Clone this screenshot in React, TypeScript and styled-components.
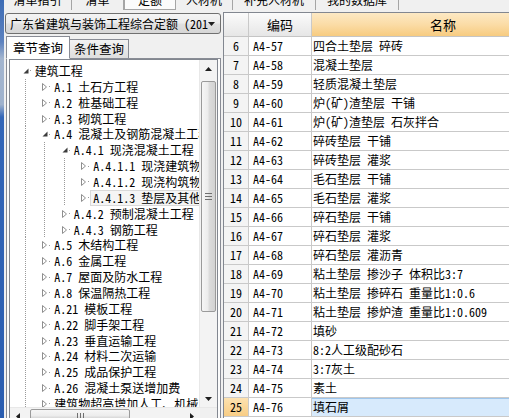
import React from 'react'
import styled, { createGlobalStyle } from 'styled-components'

const GlobalStyle = createGlobalStyle`
  html, body { margin: 0; padding: 0; background: #f0f0f0; }
  body {
    font-family: "Noto Sans Mono CJK SC", "Noto Sans CJK SC", "Liberation Sans", sans-serif;
    font-size: 12px;
    color: #000;
  }
`

const Screen = styled.div`
  width: 509px;
  height: 418px;
  overflow: hidden;
  display: flex;
  background: #f0f0f0;
`
const SideStrip = styled.div`
  width: 4px;
  flex: none;
  background: linear-gradient(to bottom, #3d6cb5 0%, #5d82bf 10%, #a3b5cf 14%, #9fb2cd 25%, #3366b8 28%, #2a5db0 100%);
`
const Main = styled.div`
  flex: 1;
  display: flex;
  flex-direction: column;
  min-width: 0;
`
const TopTabs = styled.div`
  height: 10px;
  flex: none;
  overflow: hidden;
  display: flex;
  align-items: flex-end;
`
const TopTab = styled.div<{ $w: number; $active?: boolean }>`
  width: ${p => p.$w}px;
  height: 20px;
  flex: none;
  box-sizing: border-box;
  padding-top: 3px;
  line-height: 14px;
  text-align: center;
  white-space: nowrap;
  border-right: 1px solid #a5a5a5;
  border-left: ${p => (p.$active ? '1px solid #a5a5a5' : 'none')};
  border-bottom: ${p => (p.$active ? '1px solid #a5a5a5' : 'none')};
  background: ${p => (p.$active ? '#fbfbfb' : 'transparent')};
`
const Body = styled.div`
  flex: 1;
  display: flex;
  min-height: 0;
`
const LeftPanel = styled.div`
  width: 216px;
  margin-left: 1px;
  flex: none;
  display: flex;
  flex-direction: column;
  padding-top: 3px;
`
const Dropdown = styled.div`
  height: 21px;
  box-sizing: border-box;
  border: 1px solid #707070;
  border-radius: 3px;
  background: linear-gradient(to bottom, #f4f4f4 0%, #ececec 48%, #e0e0e0 52%, #d6d6d6 100%);
  display: flex;
  align-items: center;
  padding: 0 5px 0 4px;
`
const DropText = styled.span`
  flex: 1;
  overflow: hidden;
  white-space: nowrap;
  line-height: 18px;
`
const TabRow = styled.div`
  height: 23px;
  margin-top: 1px;
  padding-left: 1px;
  display: flex;
  align-items: flex-end;
  position: relative;
  z-index: 1;
`
const PanelTab = styled.div<{ $active?: boolean }>`
  box-sizing: border-box;
  height: ${p => (p.$active ? 23 : 20)}px;
  padding: 0 ${p => (p.$active ? 6 : 4)}px;
  border: 1px solid #898c95;
  border-left: ${p => (p.$active ? '1px solid #898c95' : 'none')};
  border-bottom: ${p => (p.$active ? '1px solid #fff' : '1px solid #898c95')};
  margin-bottom: -1px;
  background: ${p => (p.$active ? '#fff' : 'linear-gradient(to bottom, #f2f2f2, #dedede)')};
  font-size: 12.5px;
  line-height: ${p => (p.$active ? 21 : 18)}px;
  white-space: nowrap;
`
const TabPage = styled.div`
  flex: 1;
  margin-left: 1px;
  border: 1px solid #898c95;
  border-bottom: none;
  background: #fcfcfc;
  padding: 0 2px;
  display: flex;
  flex-direction: column;
  min-height: 0;
`
const Tree = styled.div`
  border: 1px solid #828790;
  background: #fff;
  display: flex;
  flex-direction: column;
  flex: none;
  height: 370px;
`
const TreeMain = styled.div`
  height: 347px;
  flex: none;
  display: flex;
`
const Viewport = styled.div`
  flex: 1;
  overflow: hidden;
  padding-top: 3px;
  min-width: 0;
`
const TreeRow = styled.div`
  height: 15.86px;
  display: flex;
  align-items: center;
  padding-left: 12.7px;
  white-space: nowrap;
`
const Guide = styled.span`
  width: 19.5px;
  flex: none;
  align-self: stretch;
  background-image: linear-gradient(to bottom, #9a9a9a 50%, transparent 50%);
  background-size: 1px 2px;
  background-repeat: repeat-y;
  background-position: 2px 0;
`
const Expander = styled.span`
  width: 6px;
  height: 8px;
  flex: none;
  display: flex;
  align-items: center;
`
const Connector = styled.span`
  width: 3px;
  height: 1px;
  flex: none;
  background-image: linear-gradient(to right, transparent 1px, #9a9a9a 1px, #9a9a9a 2px, transparent 2px);
`
const Label = styled.span<{ $selected?: boolean }>`
  border: 1px solid ${p => (p.$selected ? '#d9d9d9' : 'transparent')};
  background: ${p => (p.$selected ? '#f5f5f5' : 'transparent')};
  padding: 0 2px;
  line-height: 14px;
`
const VScroll = styled.div`
  width: 17px;
  flex: none;
  display: flex;
  flex-direction: column;
  background: #f3f3f3;
  border-left: 1px solid #e8e8e8;
`
const ScrollBtn = styled.div<{ $size?: number }>`
  height: 17px;
  width: ${p => (p.$size ? `${p.$size}px` : 'auto')};
  flex: none;
  display: flex;
  align-items: center;
  justify-content: center;
`
const VTrack = styled.div`
  flex: 1;
  padding: 4px 1px 0;
`
const VThumb = styled.div`
  height: 231px;
  box-sizing: border-box;
  border: 1px solid #9a9a9a;
  border-radius: 2px;
  background: linear-gradient(to right, #f6f6f6 0%, #ececec 45%, #dcdcdc 55%, #d2d2d2 100%);
  display: flex;
  align-items: center;
  justify-content: center;
`
const HScroll = styled.div`
  height: 17px;
  flex: none;
  display: flex;
  background: #f3f3f3;
  border-top: 1px solid #e8e8e8;
`
const HTrack = styled.div`
  flex: 1;
  padding: 1px 0 1px 4px;
`
const HThumb = styled.div`
  width: 100px;
  height: 100%;
  box-sizing: border-box;
  border: 1px solid #9a9a9a;
  border-radius: 2px;
  background: linear-gradient(to bottom, #f6f6f6 0%, #ececec 45%, #dcdcdc 55%, #d2d2d2 100%);
  display: flex;
  align-items: center;
  justify-content: center;
`
const Corner = styled.div`
  width: 17px;
  flex: none;
  background: #f0f0f0;
`
const Grid = styled.div`
  flex: 1;
  margin: 2px 0 0 2px;
  border-left: 1px solid #828790;
  border-top: 1px solid #828790;
  background: #fff;
  overflow: hidden;
  min-width: 0;
`
const GridRow = styled.div<{ $head?: boolean }>`
  display: flex;
  height: ${p => (p.$head ? 24 : 19)}px;
  box-sizing: border-box;
  border-bottom: 1px solid ${p => (p.$head ? '#c5c5c5' : '#c9c9c9')};
`
const NumCell = styled.div<{ $head?: boolean; $active?: boolean }>`
  width: 25px;
  flex: none;
  box-sizing: border-box;
  border-right: 1px solid #c9c9c9;
  text-align: center;
  line-height: 18px;
  background: ${p =>
    p.$head
      ? 'linear-gradient(to bottom, #fbfbfb, #e6e6e6)'
      : p.$active
      ? 'linear-gradient(to bottom, #fde2b0, #f8cd85)'
      : '#f4f4f4'};
`
const CodeCell = styled.div<{ $head?: boolean }>`
  width: 63px;
  flex: none;
  box-sizing: border-box;
  border-right: 1px solid #c9c9c9;
  padding-left: ${p => (p.$head ? 0 : 4)}px;
  text-align: ${p => (p.$head ? 'center' : 'left')};
  line-height: ${p => (p.$head ? 23 : 18)}px;
  font-size: ${p => (p.$head ? 13 : 12)}px;
  background: ${p => (p.$head ? 'linear-gradient(to bottom, #fbfbfb, #e6e6e6)' : '#fff')};
`
const NameCell = styled.div<{ $head?: boolean; $active?: boolean }>`
  width: 262px;
  flex: none;
  box-sizing: border-box;
  padding-left: ${p => (p.$head ? 0 : 1)}px;
  text-align: ${p => (p.$head ? 'center' : 'left')};
  line-height: ${p => (p.$head ? 23 : 18)}px;
  font-size: ${p => (p.$head ? 13 : 12)}px;
  white-space: nowrap;
  overflow: hidden;
  background: ${p =>
    p.$head
      ? 'linear-gradient(to bottom, #fde9c4 0%, #fbdca6 50%, #f7cb80 100%)'
      : p.$active
      ? '#d7eafc'
      : '#fff'};
  box-shadow: ${p => (p.$active ? 'inset 0 1px 0 #9fc6ec' : 'none')};
`

type Node = { level: number; text: string; state?: 'open' | 'closed'; selected?: boolean }

const treeNodes: Node[] = [
  { level: 0, text: '建筑工程', state: 'open' },
  { level: 1, text: 'A.1 土石方工程', state: 'closed' },
  { level: 1, text: 'A.2 桩基础工程', state: 'closed' },
  { level: 1, text: 'A.3 砌筑工程', state: 'closed' },
  { level: 1, text: 'A.4 混凝土及钢筋混凝土工程', state: 'open' },
  { level: 2, text: 'A.4.1 现浇混凝土工程', state: 'open' },
  { level: 3, text: 'A.4.1.1 现浇建筑物混凝土', state: 'closed' },
  { level: 3, text: 'A.4.1.2 现浇构筑物混凝土', state: 'closed' },
  { level: 3, text: 'A.4.1.3 垫层及其他', state: 'closed', selected: true },
  { level: 2, text: 'A.4.2 预制混凝土工程', state: 'closed' },
  { level: 2, text: 'A.4.3 钢筋工程', state: 'closed' },
  { level: 1, text: 'A.5 木结构工程', state: 'closed' },
  { level: 1, text: 'A.6 金属工程', state: 'closed' },
  { level: 1, text: 'A.7 屋面及防水工程', state: 'closed' },
  { level: 1, text: 'A.8 保温隔热工程', state: 'closed' },
  { level: 1, text: 'A.21 模板工程', state: 'closed' },
  { level: 1, text: 'A.22 脚手架工程', state: 'closed' },
  { level: 1, text: 'A.23 垂直运输工程', state: 'closed' },
  { level: 1, text: 'A.24 材料二次运输', state: 'closed' },
  { level: 1, text: 'A.25 成品保护工程', state: 'closed' },
  { level: 1, text: 'A.26 混凝土泵送增加费', state: 'closed' },
  { level: 1, text: '建筑物超高增加人工、机械', state: 'closed' },
]

const rows: [number, string, string][] = [
  [6, 'A4-57', '四合土垫层 碎砖'],
  [7, 'A4-58', '混凝土垫层'],
  [8, 'A4-59', '轻质混凝土垫层'],
  [9, 'A4-60', '炉(矿)渣垫层 干铺'],
  [10, 'A4-61', '炉(矿)渣垫层 石灰拌合'],
  [11, 'A4-62', '碎砖垫层 干铺'],
  [12, 'A4-63', '碎砖垫层 灌浆'],
  [13, 'A4-64', '毛石垫层 干铺'],
  [14, 'A4-65', '毛石垫层 灌浆'],
  [15, 'A4-66', '碎石垫层 干铺'],
  [16, 'A4-67', '碎石垫层 灌浆'],
  [17, 'A4-68', '碎石垫层 灌沥青'],
  [18, 'A4-69', '粘土垫层 掺沙子 体积比3:7'],
  [19, 'A4-70', '粘土垫层 掺碎石 重量比1:0.6'],
  [20, 'A4-71', '粘土垫层 掺炉渣 重量比1:0.609'],
  [21, 'A4-72', '填砂'],
  [22, 'A4-73', '8:2人工级配砂石'],
  [23, 'A4-74', '3:7灰土'],
  [24, 'A4-75', '素土'],
  [25, 'A4-76', '填石屑'],
]

const topTabs: [string, number][] = [
  ['清单指引', 68],
  ['清单', 52],
  ['定额', 52],
  ['人材机', 57],
  ['补充人材机', 83],
  ['我的数据库', 83],
]

function Toggle({ state }: { state?: 'open' | 'closed' }) {
  if (state === 'open') {
    return (
      <svg width="6" height="8" viewBox="0 0 6 8">
        <polygon points="5.5,1.5 5.5,6.5 0.5,6.5" fill="#3c3c3c" />
      </svg>
    )
  }
  return (
    <svg width="6" height="8" viewBox="0 0 6 8">
      <polygon points="0.5,0.5 4.5,4 0.5,7.5" fill="none" stroke="#8e8e8e" strokeWidth="1" />
    </svg>
  )
}

function Arrow({ dir }: { dir: 'up' | 'down' | 'left' | 'right' }) {
  const pts = {
    up: '0,4 3.5,0 7,4',
    down: '0,0 3.5,4 7,0',
    left: '4,0 0,3.5 4,7',
    right: '0,0 4,3.5 0,7',
  }[dir]
  const vertical = dir === 'up' || dir === 'down'
  return (
    <svg width={vertical ? 7 : 4} height={vertical ? 4 : 7} viewBox={vertical ? '0 0 7 4' : '0 0 4 7'}>
      <polygon points={pts} fill="#1e1e1e" />
    </svg>
  )
}

function Grip({ horizontal }: { horizontal?: boolean }) {
  return horizontal ? (
    <svg width="7" height="7" viewBox="0 0 7 7">
      <path d="M0.5 0v7M3.5 0v7M6.5 0v7" stroke="#6f6f6f" strokeWidth="1" />
    </svg>
  ) : (
    <svg width="7" height="7" viewBox="0 0 7 7">
      <path d="M0 0.5h7M0 3.5h7M0 6.5h7" stroke="#6f6f6f" strokeWidth="1" />
    </svg>
  )
}

export default function App() {
  return (
    <>
      <GlobalStyle />
      <Screen>
        <SideStrip />
        <Main>
          <TopTabs>
            {topTabs.map(([t, w]) => (
              <TopTab key={t} $w={w} $active={t === '定额'}>
                {t}
              </TopTab>
            ))}
          </TopTabs>
          <Body>
            <LeftPanel>
              <Dropdown>
                <DropText>广东省建筑与装饰工程综合定额 (2010)</DropText>
                <Arrow dir="down" />
              </Dropdown>
              <TabRow>
                <PanelTab $active>章节查询</PanelTab>
                <PanelTab>条件查询</PanelTab>
              </TabRow>
              <TabPage>
                <Tree>
                  <TreeMain>
                    <Viewport>
                      {treeNodes.map((n, i) => (
                        <TreeRow key={i}>
                          {Array.from({ length: n.level }).map((_, g) => (
                            <Guide key={g} />
                          ))}
                          <Expander>
                            <Toggle state={n.state} />
                          </Expander>
                          <Connector />
                          <Label $selected={n.selected}>{n.text}</Label>
                        </TreeRow>
                      ))}
                    </Viewport>
                    <VScroll>
                      <ScrollBtn>
                        <Arrow dir="up" />
                      </ScrollBtn>
                      <VTrack>
                        <VThumb>
                          <Grip />
                        </VThumb>
                      </VTrack>
                      <ScrollBtn>
                        <Arrow dir="down" />
                      </ScrollBtn>
                    </VScroll>
                  </TreeMain>
                  <HScroll>
                    <ScrollBtn $size={16}>
                      <Arrow dir="left" />
                    </ScrollBtn>
                    <HTrack>
                      <HThumb>
                        <Grip horizontal />
                      </HThumb>
                    </HTrack>
                    <ScrollBtn $size={16}>
                      <Arrow dir="right" />
                    </ScrollBtn>
                    <Corner />
                  </HScroll>
                </Tree>
              </TabPage>
            </LeftPanel>
            <Grid>
              <GridRow $head>
                <NumCell $head />
                <CodeCell $head>编码</CodeCell>
                <NameCell $head>名称</NameCell>
              </GridRow>
              {rows.map(([n, code, name]) => (
                <GridRow key={n}>
                  <NumCell $active={n === 25}>{n}</NumCell>
                  <CodeCell>{code}</CodeCell>
                  <NameCell $active={n === 25}>{name}</NameCell>
                </GridRow>
              ))}
            </Grid>
          </Body>
        </Main>
      </Screen>
    </>
  )
}
